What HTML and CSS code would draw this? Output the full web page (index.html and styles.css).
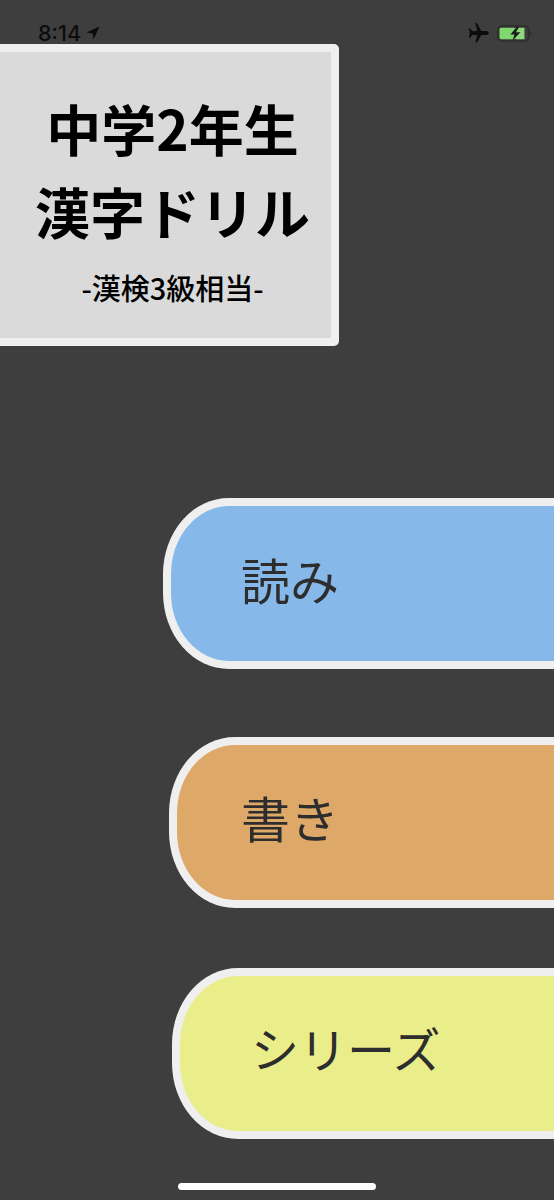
FILE: index.html
```html
<!DOCTYPE html>
<html lang="ja">
<head>
<meta charset="utf-8">
<title>中学2年生 漢字ドリル</title>
<link rel="stylesheet" href="styles.css">
</head>
<body>
<div class="screen">
  <header class="status">
    <div class="status-left">
      <span class="time">8:14</span>
      <svg class="loc" width="14" height="14" viewBox="0 0 14 14"><path d="M13.6 .6 L.4 6.6 L6.6 7.4 L7.5 13.6 Z" fill="#0c0c0c"/></svg>
    </div>
    <div class="status-right">
      <svg class="plane" width="22" height="20" viewBox="0 0 22 20"><path d="M8.4 0 H10 L14.2 8 H19.4 C21 8 21.8 9.2 21.8 10 C21.8 10.8 21 12 19.4 12 H14.2 L10 19.6 H8.4 L10.2 12 H5.2 L3.2 14.6 H1.8 L2.8 10 L1.8 5.4 H3.2 L5.2 8 H10.2 Z" fill="#0c0c0c"/></svg>
      <svg class="battery" width="36" height="17" viewBox="0 0 34 16">
        <rect x=".8" y="1" width="29" height="14" rx="3.6" fill="none" stroke="#2c2c2c" stroke-width="1.4"/>
        <rect x="2.4" y="2.6" width="15" height="10.8" rx="1.8" fill="#7fd86e"/>
        <rect x="17.4" y="2.6" width="8.5" height="10.8" fill="#8fd97d"/>
        <path d="M31.4 5.5 C33 6 33 10 31.4 10.5 Z" fill="#2c2c2c"/>
        <path d="M19 1.5 L12.6 9 H16.5 L14.6 14.5 L22.2 6.8 H18 L21 1.5 Z" fill="#1c1c1c"/>
      </svg>
    </div>
  </header>

  <section class="title-card">
    <h1 class="title">中学2年生<br>漢字ドリル</h1>
    <p class="subtitle">-漢検3級相当-</p>
  </section>

  <nav class="menu">
    <a class="btn btn-read"><span>読み</span></a>
    <a class="btn btn-write"><span>書き</span></a>
    <a class="btn btn-series"><span>シリーズ</span></a>
  </nav>

  <div class="home-bar"></div>
</div>
</body>
</html>
```
FILE: styles.css
```css
* { box-sizing: border-box; }
html, body { margin: 0; padding: 0; }
body { background: #3e3e3e; font-family: "Noto Sans CJK JP", "Noto Sans", sans-serif; }
.screen { width: 554px; height: 1200px; overflow: hidden; display: flex; flex-direction: column; background: #3e3e3e; }

.status { height: 44px; display: flex; justify-content: space-between; padding: 20px 21px 0 38px; flex: none; }
.status-left { display: flex; align-items: flex-start; gap: 5px; height: 24px; }
.time { font-family: Inter, "Liberation Sans", sans-serif; font-size: 21.5px; line-height: 26px; font-weight: 500; color: #0c0c0c; }
.loc { margin-top: 6px; }
.status-right { display: flex; align-items: flex-start; gap: 8px; }
.plane { margin-top: 3px; }
.battery { margin-top: 5px; }

.title-card { width: 347px; height: 302px; margin-left: -8px; flex: none; background: #dadada; border: 8px solid #efefef; border-radius: 5px; display: flex; flex-direction: column; align-items: center; padding: 34px 0 0 14px; }
.title { margin: 0; font-size: 55px; line-height: 83px; font-weight: 700; color: #000; text-align: center; white-space: nowrap; }
.subtitle { margin: 15px 0 0; font-size: 29px; line-height: 40px; font-weight: 500; color: #000; white-space: nowrap; }

.menu { display: flex; flex-direction: column; flex: none; }
.btn { display: flex; align-items: center; height: 171px; border: 8px solid #efefef; border-right: 0; border-radius: 66px 0 0 66px / 76px 0 0 76px; color: #2d2d2d; font-size: 49px; line-height: 1; }
.btn span { white-space: nowrap; }
.btn-read { margin: 152px 0 0 163px; background: #86b8ea; padding-left: 70px; padding-bottom: 10px; }
.btn-write { margin: 68px 0 0 169px; background: #dea869; padding-left: 64px; padding-bottom: 12px; }
.btn-series { margin: 60px 0 0 172px; background: #e9ed8a; padding-left: 71px; padding-bottom: 14px; font-size: 48px; }

.home-bar { width: 198px; height: 7px; border-radius: 4px; background: #fff; margin: 44px 0 0 178px; flex: none; }
```
